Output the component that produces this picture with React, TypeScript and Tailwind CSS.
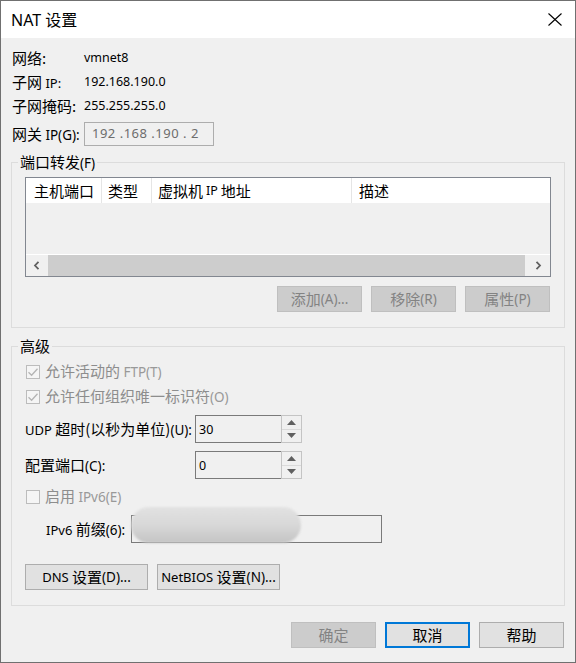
import React from "react";

const L = ({ children, className = "" }: { children: React.ReactNode; className?: string }) => (
  <span className={`font-['Noto_Sans',sans-serif] text-[12.5px] ${className}`}>{children}</span>
);

function Check({ checked }: { checked: boolean }) {
  return (
    <span className="w-[14px] h-[14px] shrink-0 border border-[#bcbcbc] bg-[#f5f5f5] flex items-center justify-center">
      {checked && (
        <svg width="12" height="12" viewBox="0 0 12 12">
          <path d="M1.5 6.2 L4.6 9.2 L10.5 2.8" fill="none" stroke="#b4b4b4" strokeWidth="1.3" />
        </svg>
      )}
    </span>
  );
}

function Spin({ value }: { value: string }) {
  return (
    <div className="flex h-[28px] w-[107px]">
      <div className="w-[86px] border-l border-t border-b border-[#7a7a7a] bg-[#f0f0f0] pl-[3px] pt-[1px]">
        <span className="font-['Noto_Sans',sans-serif] text-[12.5px] leading-[20px] text-black">{value}</span>
      </div>
      <div className="w-[21px] flex flex-col border border-[#c4c4c4] bg-[#f0f0f0]">
        <div className="flex-1 flex items-center justify-center border-b border-[#dadada]">
          <svg width="9" height="5" viewBox="0 0 9 5">
            <path d="M0 5 L4.5 0 L9 5 Z" fill="#606060" />
          </svg>
        </div>
        <div className="flex-1 flex items-center justify-center">
          <svg width="9" height="5" viewBox="0 0 9 5">
            <path d="M0 0 L4.5 5 L9 0 Z" fill="#606060" />
          </svg>
        </div>
      </div>
    </div>
  );
}

function Btn({
  children,
  w,
  kind = "normal",
}: {
  children: React.ReactNode;
  w: "sm" | "lg";
  kind?: "normal" | "disabled" | "default";
}) {
  const width = w === "sm" ? "w-[85px]" : "w-[123px]";
  const style =
    kind === "disabled"
      ? "bg-[#cccccc] border border-[#bfbfbf] text-[#838383]"
      : kind === "default"
      ? "bg-[#e1e1e1] border-2 border-[#0078d7] text-black"
      : "bg-[#e1e1e1] border border-[#adadad] text-black";
  return (
    <div className={`${width} h-[26px] flex items-center justify-center leading-[20px] ${style}`}>{children}</div>
  );
}

function InfoRow({ label, value }: { label: React.ReactNode; value: string }) {
  return (
    <div className="flex h-[24px] items-center">
      <div className="w-[73px] pl-[1px] leading-[20px]">{label}</div>
      <L className="text-black">{value}</L>
    </div>
  );
}

function Chevron({ dir }: { dir: "l" | "r" }) {
  return (
    <svg width="8" height="9" viewBox="0 0 8 9">
      <path
        d={dir === "l" ? "M5.5 0.8 L2 4.5 L5.5 8.2" : "M2.5 0.8 L6 4.5 L2.5 8.2"}
        fill="none"
        stroke="#606060"
        strokeWidth="1.8"
      />
    </svg>
  );
}

export default function App() {
  return (
    <div className="w-[576px] h-[663px] border border-[#707070] bg-[#f0f0f0] flex flex-col font-['Noto_Sans_CJK_SC',sans-serif] text-[15px] text-black">
      {/* Title bar */}
      <div className="h-[37px] bg-white flex items-center justify-between pl-[10px] pr-[13px]">
        <div className="text-[16px] leading-[22px]">
          <span className="font-['Noto_Sans',sans-serif]">NAT </span>设置
        </div>
        <svg width="14" height="13" viewBox="0 0 14 13">
          <path d="M0.5 0.5 L13.5 12.5 M13.5 0.5 L0.5 12.5" stroke="#000" strokeWidth="1.1" fill="none" />
        </svg>
      </div>

      {/* Body */}
      <div className="flex-1 px-[10px] flex flex-col">
        <div className="pt-[8px] flex flex-col">
          <InfoRow label="网络:" value="vmnet8" />
          <InfoRow
            label={
              <>
                子网 <L className="text-[13px]">IP:</L>
              </>
            }
            value="192.168.190.0"
          />
          <InfoRow label="子网掩码:" value="255.255.255.0" />
          <div className="flex h-[24px] items-center mt-[4px]">
            <div className="w-[73px] pl-[1px] leading-[20px]">
              网关 <L className="text-[13.5px]">IP(G):</L>
            </div>
            <div className="w-[130px] h-[24px] border border-[#adadad] bg-[#f0f0f0] flex items-center pl-[7px]">
              <span className="font-['Noto_Sans',sans-serif] text-[13px] tracking-[0.5px] text-[#6d6d6d] whitespace-pre">
                192 .168 .190 . 2
              </span>
            </div>
          </div>
        </div>

        {/* Port forwarding group */}
        <fieldset className="mt-[6px] border border-[#dcdcdc] min-w-0">
          <legend className="ml-[6px] px-[2px] leading-[20px]">
            端口转发<L className="text-[13.5px]">(F)</L>
          </legend>
          <div className="px-[13px] pt-[4px] pb-[15px] flex flex-col">
            <div className="border border-[#828790] flex flex-col">
              <div className="h-[25px] bg-white flex leading-[20px]">
                <div className="w-[76px] border-r border-[#e5e5e5] pl-[8px] flex items-center">主机端口</div>
                <div className="w-[50px] border-r border-[#e5e5e5] pl-[6px] flex items-center">类型</div>
                <div className="w-[200px] border-r border-[#e5e5e5] pl-[6px] flex items-center">
                  虚拟机 <L className="mx-[3px]">IP</L> 地址
                </div>
                <div className="flex-1 pl-[7px] flex items-center">描述</div>
              </div>
              <div className="h-[51px] bg-[#f0f0f0]" />
              <div className="h-[22px] border-t border-white flex bg-[#f0f0f0]">
                <div className="w-[22px] flex items-center justify-center">
                  <Chevron dir="l" />
                </div>
                <div className="flex-1 bg-[#cdcdcd]" />
                <div className="w-[25px] flex items-center justify-center">
                  <Chevron dir="r" />
                </div>
              </div>
            </div>
            <div className="mt-[9px] flex justify-end gap-[9px] pr-[1px]">
              <Btn w="sm" kind="disabled">
                添加<L className="text-[13.5px]">(A)...</L>
              </Btn>
              <Btn w="sm" kind="disabled">
                移除<L className="text-[13.5px]">(R)</L>
              </Btn>
              <Btn w="sm" kind="disabled">
                属性<L className="text-[13.5px]">(P)</L>
              </Btn>
            </div>
          </div>
        </fieldset>

        {/* Advanced group */}
        <fieldset className="mt-[8px] border border-[#dcdcdc] min-w-0">
          <legend className="ml-[6px] px-[2px] leading-[20px]">高级</legend>
          <div className="pt-[3px] pb-[15px] flex flex-col">
            <div className="h-[25px] flex items-center pl-[14px] gap-[5px] text-[#8d8d8d] leading-[20px]">
              <Check checked />
              <span>
                允许活动的 <L className="text-[13.5px] text-[#999]">FTP(T)</L>
              </span>
            </div>
            <div className="h-[25px] flex items-center pl-[14px] gap-[5px] text-[#8d8d8d] leading-[20px]">
              <Check checked />
              <span>
                允许任何组织唯一标识符<L className="text-[13.5px] text-[#999]">(O)</L>
              </span>
            </div>
            <div className="mt-[6px] flex items-center h-[28px]">
              <div className="w-[183px] pl-[13px] leading-[20px]">
                <L className="text-[13px]">UDP</L> 超时(以秒为单位)<L className="text-[13.5px]">(U):</L>
              </div>
              <Spin value="30" />
            </div>
            <div className="mt-[8px] flex items-center h-[28px]">
              <div className="w-[183px] pl-[13px] leading-[20px]">
                配置端口<L className="text-[13.5px]">(C):</L>
              </div>
              <Spin value="0" />
            </div>
            <div className="mt-[5px] h-[25px] flex items-center pl-[14px] gap-[5px] text-[#8d8d8d] leading-[20px]">
              <Check checked={false} />
              <span>
                启用 <L className="text-[13.5px] text-[#999]">IPv6(E)</L>
              </span>
            </div>
            <div className="mt-[6px] flex items-center h-[28px]">
              <div className="w-[119px] pl-[34px] leading-[20px]">
                <L className="text-[13px]">IPv6</L> 前缀<L className="text-[13.5px]">(6):</L>
              </div>
              <div className="relative w-[251px] h-[28px] border border-[#7a7a7a] bg-[#f0f0f0]">
                <div className="absolute left-[-1px] top-[-9px] w-[170px] h-[36px] rounded-[18px] bg-linear-to-b from-[#e2e2e2] via-[#d8d8d8] to-[#c4c4c4] blur-[1px]" />
              </div>
            </div>
            <div className="mt-[21px] flex gap-[9px] pl-[13px]">
              <Btn w="lg">
                <L className="text-[13px]">DNS</L>&nbsp;设置<L className="text-[13.5px]">(D)...</L>
              </Btn>
              <Btn w="lg">
                <L className="text-[13px]">NetBIOS</L>&nbsp;设置<L className="text-[13.5px]">(N)...</L>
              </Btn>
            </div>
          </div>
        </fieldset>

        {/* Dialog buttons */}
        <div className="mt-[16px] flex justify-end gap-[9px] pr-[1px]">
          <Btn w="sm" kind="disabled">确定</Btn>
          <Btn w="sm" kind="default">取消</Btn>
          <Btn w="sm">帮助</Btn>
        </div>
      </div>
    </div>
  );
}
